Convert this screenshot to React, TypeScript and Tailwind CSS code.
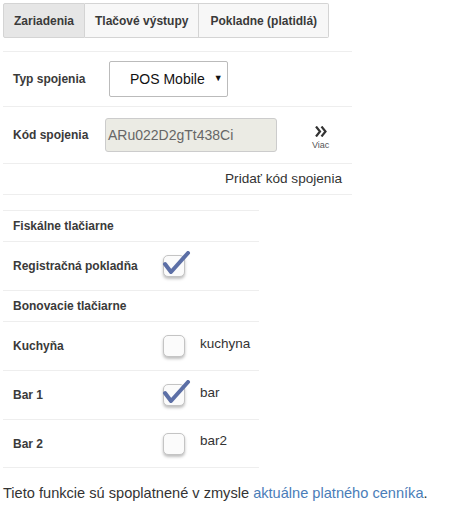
import React from 'react';

const font = { fontFamily: '"Liberation Sans", Arial, sans-serif' };

function Check({ checked }: { checked: boolean }) {
  return (
    <div className="relative w-[22px] h-[22px]">
      <div className="w-[22px] h-[22px] rounded-[5px] border border-[#c4c4c4] bg-[#fbfbfb] shadow-[0_2px_3px_rgba(0,0,0,0.25)]" />
      {checked && (
        <svg className="absolute left-[-1px] top-[-4px]" width="30" height="28" viewBox="0 0 30 28">
          <path d="M3 13 L9 21 L26 2" fill="none" stroke="#5c6fa6" strokeWidth="4" strokeLinecap="round" strokeLinejoin="round" />
        </svg>
      )}
    </div>
  );
}

const printers = [
  { label: 'Kuchyňa', checked: false, name: 'kuchyna' },
  { label: 'Bar 1', checked: true, name: 'bar' },
  { label: 'Bar 2', checked: false, name: 'bar2' },
];

export default function App() {
  return (
    <div className="pl-[3px] pt-[3px] text-[#333] bg-white min-h-[524px]" style={font}>
      <div className="flex h-[35px] text-[12px] font-bold text-[#3a3a3a]">
        <div className="flex items-center px-[10px] border border-[#d4d4d4] bg-[#e6e6e6] rounded-l-[2px]">Zariadenia</div>
        <div className="flex items-center px-[10px] border border-l-0 border-[#d4d4d4] bg-[#f7f7f7]">Tlačové výstupy</div>
        <div className="flex items-center px-[11px] border border-l-0 border-[#d4d4d4] bg-[#f7f7f7] rounded-r-[2px]">Pokladne (platidlá)</div>
      </div>

      <div className="mt-[13px] w-[349px] text-[12px] font-bold text-[#3a3a3a]">
        <div className="flex items-center h-[55px] border-t border-[#eee] pl-[10px]">
          <span className="w-[96px]">Typ spojenia</span>
          <div className="flex items-center w-[119px] h-[36px] border border-[#bbb] rounded-[2px] bg-white font-normal text-[14px] text-[#111] whitespace-nowrap">
            <span className="ml-[20px]">POS Mobile</span>
            <span className="ml-[9px] text-[9px]">▼</span>
          </div>
        </div>
        <div className="flex items-center h-[57px] border-t border-[#eee] pl-[10px]">
          <span className="w-[92px] whitespace-nowrap">Kód spojenia</span>
          <div className="flex items-center w-[172px] h-[34px] border border-[#ccc] rounded-[3px] bg-[#ebebe4] pl-[2px] font-normal text-[14px] text-[#666]">
            ARu022D2gTt438Ci
          </div>
          <div className="ml-[35px] flex flex-col items-center font-normal pt-[6px]">
            <svg width="12" height="11" viewBox="0 0 12 11">
              <path d="M1 0.5 L5 5.5 L1 10.5 M6.5 0.5 L10.5 5.5 L6.5 10.5" fill="none" stroke="#333" strokeWidth="2.2" />
            </svg>
            <span className="text-[9px] text-[#555] leading-[10px] mt-[3px]">Viac</span>
          </div>
        </div>
        <div className="flex items-center justify-end h-[32px] border-t border-b border-[#eee] pr-[10px] font-normal text-[13.6px] text-[#333]">
          Pridať kód spojenia
        </div>
      </div>

      <div className="mt-[15px] w-[256px] text-[12px] font-bold text-[#3a3a3a]">
        <div className="flex items-center h-[31px] border-t border-[#eee] pl-[10px]">Fiskálne tlačiarne</div>
        <div className="flex items-center h-[49px] border-t border-[#eee] pl-[10px]">
          <span className="w-[150px]">Registračná pokladňa</span>
          <Check checked />
        </div>
        <div className="flex items-center h-[31px] border-t border-[#eee] pl-[10px]">Bonovacie tlačiarne</div>
        {printers.map((p) => (
          <div key={p.name} className="flex items-center h-[49px] border-t border-[#eee] pl-[10px] last:border-b">
            <span className="w-[150px]">{p.label}</span>
            <Check checked={p.checked} />
            <span className="ml-[15px] mb-[4px] font-normal text-[13.5px] text-[#333]">{p.name}</span>
          </div>
        ))}
      </div>

      <p className="mt-[15px] text-[14.6px] text-[#333] whitespace-nowrap">
        Tieto funkcie sú spoplatnené v zmysle <a className="text-[#4a7db8]">aktuálne platného cenníka</a>.
      </p>
    </div>
  );
}
